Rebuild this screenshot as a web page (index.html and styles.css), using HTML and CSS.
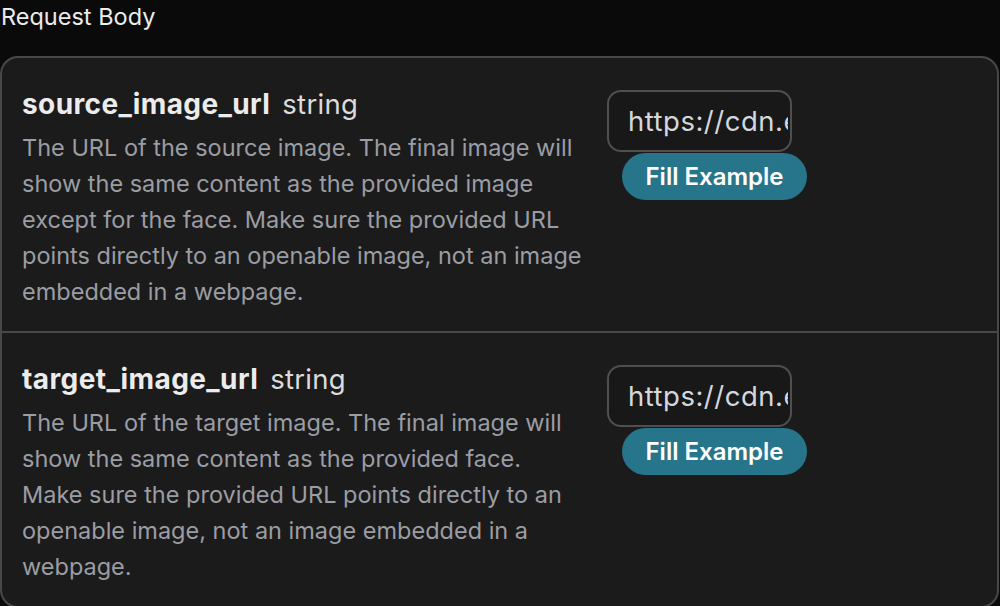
FILE: index.html
```html
<!DOCTYPE html>
<html>
<head>
<meta charset="utf-8">
<link rel="stylesheet" href="styles.css">
</head>
<body>
<div class="page">
  <div class="heading">Request Body</div>
  <div class="card">
    <div class="row">
      <div class="info">
        <div class="title"><span class="name">source_image_url</span><span class="type">string</span></div>
        <div class="desc">The URL of the source image. The final image will show the same content as the provided image except for the face. Make sure the provided URL points directly to an openable image, not an image embedded in a webpage.</div>
      </div>
      <div class="control">
        <input class="field" type="text" value="https://cdn.example.com/source.jpg">
        <button class="fill">Fill Example</button>
      </div>
    </div>
    <div class="row">
      <div class="info">
        <div class="title"><span class="name">target_image_url</span><span class="type">string</span></div>
        <div class="desc">The URL of the target image. The final image will show the same content as the provided face. Make sure the provided URL points directly to an openable image, not an image embedded in a webpage.</div>
      </div>
      <div class="control">
        <input class="field" type="text" value="https://cdn.example.com/target.jpg">
        <button class="fill">Fill Example</button>
      </div>
    </div>
  </div>
</div>
</body>
</html>
```
FILE: styles.css
```css
html, body {
  margin: 0;
  padding: 0;
  background: #0a0a0a;
  font-family: Inter, "Noto Sans", sans-serif;
  overflow: hidden;
}
.page {
  width: 1000px;
  height: 606px;
  overflow: hidden;
}
.heading {
  color: #ececec;
  font-size: 23.5px;
  line-height: 34px;
  padding: 0 0 0 1px;
  height: 56px;
}
.card {
  background: #1b1b1b;
  border: 2px solid #484848;
  border-radius: 18px;
  margin: 0 1px 0 0;
}
.row {
  display: flex;
  gap: 23px;
  padding: 29px 19px 21px 20px;
}
.row + .row {
  border-top: 2px solid #484848;
}
.info {
  width: 562px;
  flex: none;
}
.title {
  display: flex;
  align-items: baseline;
  gap: 12px;
  line-height: 34px;
  margin-bottom: 9px;
}
.name {
  color: #ececec;
  font-weight: 700;
  font-size: 28px;
  letter-spacing: 0.4px;
}
.type {
  color: #dcdcdc;
  font-size: 27.5px;
  letter-spacing: 0.3px;
}
.desc {
  color: #9b9da4;
  font-size: 23.5px;
  line-height: 36px;
}
.control {
  display: flex;
  flex-direction: column;
  align-items: flex-start;
  gap: 1px;
  padding-top: 3px;
}
.field {
  box-sizing: border-box;
  width: 185px;
  height: 62px;
  border: 2px solid #4f4f4f;
  border-radius: 14px;
  background: #181818;
  color: #d4d7de;
  font-family: Inter, "Noto Sans", sans-serif;
  font-size: 27.5px;
  letter-spacing: 0.5px;
  padding: 0 2px 0 19px;
  outline: none;
}
.fill {
  box-sizing: border-box;
  margin-left: 15px;
  width: 185px;
  height: 47px;
  border: none;
  border-radius: 24px;
  background: #27758a;
  color: #ffffff;
  font-family: Inter, "Noto Sans", sans-serif;
  font-weight: 600;
  font-size: 24px;
  padding: 0;
}
```
